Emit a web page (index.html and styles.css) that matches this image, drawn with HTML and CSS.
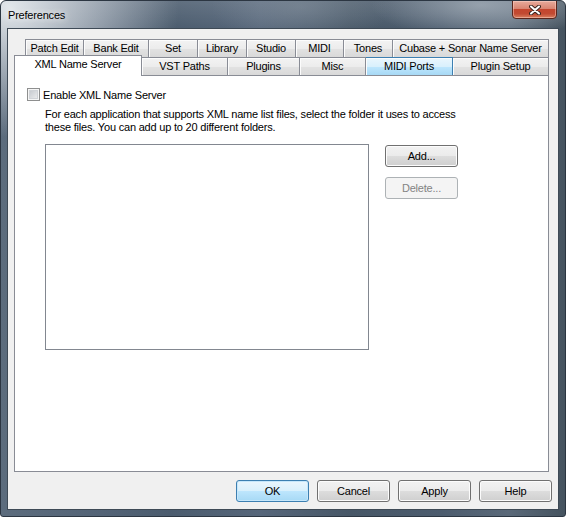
FILE: index.html
```
<!DOCTYPE html>
<html lang="en">
<head>
    <meta charset="UTF-8">
    <title>Preferences</title>
    <link rel="stylesheet" href="styles.css">
</head>
<body>
    <div class="window">
        <div class="titlebar">
            <span class="title">Preferences</span>
            <button class="close-btn" title="Close">
                <svg width="12" height="10" viewBox="0 0 12 10">
                    <path d="M2 1.5 L10 8.5 M10 1.5 L2 8.5" stroke="#3b2620" stroke-width="4" stroke-linecap="round"/>
                    <path d="M2 1.5 L10 8.5 M10 1.5 L2 8.5" stroke="#fff" stroke-width="2" stroke-linecap="round"/>
                </svg>
            </button>
        </div>

        <div class="client">
            <div class="tabs">
                <div class="tab-row back">
                    <div class="tab">Patch Edit</div>
                    <div class="tab">Bank Edit</div>
                    <div class="tab">Set</div>
                    <div class="tab">Library</div>
                    <div class="tab">Studio</div>
                    <div class="tab">MIDI</div>
                    <div class="tab">Tones</div>
                    <div class="tab">Cubase + Sonar Name Server</div>
                </div>
                <div class="tab-row front">
                    <div class="tab selected">XML Name Server</div>
                    <div class="tab">VST Paths</div>
                    <div class="tab">Plugins</div>
                    <div class="tab">Misc</div>
                    <div class="tab hover">MIDI Ports</div>
                    <div class="tab">Plugin Setup</div>
                </div>

                <div class="panel">
                    <label class="check-row">
                        <span class="checkbox"></span>
                        Enable XML Name Server
                    </label>
                    <p class="hint">For each application that supports XML name list files, select the folder it uses to access<br>these files. You can add up to 20 different folders.</p>

                    <div class="list-row">
                        <div class="listbox"></div>
                        <div class="side-buttons">
                            <button class="btn">Add...</button>
                            <button class="btn" disabled>Delete...</button>
                        </div>
                    </div>
                </div>
            </div>

            <div class="footer">
                <button class="btn default">OK</button>
                <button class="btn">Cancel</button>
                <button class="btn">Apply</button>
                <button class="btn">Help</button>
            </div>
        </div>
    </div>
</body>
</html>
```

FILE: styles.css
```
body {
    margin: 0;
    background: #fff;
    font: 11px "Liberation Sans", Arial, sans-serif;
    letter-spacing: -0.2px;
    color: #000;
}

/* Aero-style window frame */
.window {
    width: 566px;
    height: 517px;
    box-sizing: border-box;
    border: 1px solid #2c3642;
    border-radius: 6px 6px 3px 3px;
    display: flex;
    flex-direction: column;
    overflow: hidden;
    background:
        radial-gradient(ellipse 170px 130px at 8px 6px, rgba(232, 236, 240, 0.95), rgba(232, 236, 240, 0)),
        radial-gradient(ellipse 110px 34px at 480px 4px, rgba(170, 180, 190, 0.7), rgba(170, 180, 190, 0)),
        radial-gradient(ellipse 90px 40px at 300px 6px, rgba(140, 152, 164, 0.45), rgba(140, 152, 164, 0)),
        linear-gradient(to bottom, rgba(255, 255, 255, 0.12), rgba(255, 255, 255, 0) 28px),
        linear-gradient(to right, #5c6c7d 0%, #536376 18%, #4b5c6e 30%, #56667a 46%, #475767 62%, #4c5c6e 78%, #5a6979 90%, #45535f 100%);
}

.titlebar {
    height: 27px;
    display: flex;
    justify-content: space-between;
    align-items: flex-start;
    padding-left: 7px;
}

.title {
    margin-top: 8px;
    line-height: 13px;
    text-shadow: 0 0 6px rgba(255, 255, 255, 0.9), 0 0 10px rgba(255, 255, 255, 0.6);
}

.close-btn {
    width: 45px;
    height: 19px;
    margin: -1px 8px 0 0;
    padding: 0;
    display: flex;
    align-items: center;
    justify-content: center;
    border: 1px solid #5b261c;
    border-radius: 0 0 4px 4px;
    background: linear-gradient(#e8ab9c 0%, #d98572 45%, #c4462e 50%, #c24a32 75%, #d9805f 100%);
    box-shadow: inset 0 0 0 1px rgba(255, 220, 210, 0.45);
}

.client {
    flex: 1;
    margin: 0 6px 6px;
    border: 1px solid #3e4a56;
    background: #f0f0f0;
    display: flex;
    flex-direction: column;
}

/* Tab control */
.tabs {
    margin: 10px 0 0 6px;
    width: 535px;
}

.tab-row {
    display: grid;
    grid-template-rows: 18px;
}

.tab-row.back {
    margin-left: 11px;
    grid-template-columns: 59px 65px 49px 49px 49px 48px 49px 156px;
}

.tab-row.front {
    grid-template-columns: 128px 86px 72px 66px 87px 96px;
    align-items: end;
}

.tab {
    box-sizing: border-box;
    height: 18px;
    border: 1px solid #898c95;
    border-bottom: none;
    border-left: none;
    background: linear-gradient(#f3f3f3 0%, #ececec 50%, #e2e2e2 51%, #d9d9d9 100%);
    box-shadow: inset 1px 1px 0 #fcfcfc;
    text-align: center;
    line-height: 17px;
    white-space: nowrap;
}

.tab:first-child {
    border-left: 1px solid #898c95;
}

.tab.hover {
    border-color: #3c7fb1;
    background: linear-gradient(#eaf6fd 0%, #d9f0fc 50%, #bee6fd 51%, #a7d9f5 100%);
}

.tab.selected {
    position: relative;
    z-index: 2;
    height: 21px;
    margin-bottom: -1px;
    border-left: 1px solid #898c95;
    background: #fff;
    box-shadow: none;
    line-height: 16px;
}

.panel {
    box-sizing: border-box;
    width: 535px;
    height: 397px;
    border: 1px solid #898c95;
    background: #fff;
    padding: 12px 0 0 12px;
}

.check-row {
    display: flex;
    align-items: center;
    gap: 3px;
    height: 13px;
}

.checkbox {
    width: 13px;
    height: 13px;
    box-sizing: border-box;
    border: 1px solid #8e8f8f;
    background: linear-gradient(135deg, #bfc3c9, #f3f3f3);
    box-shadow: inset 0 0 0 1px #f6f6f6, inset 0 0 0 2px #d0d3d7;
}

.hint {
    margin: 7px 0 0 18px;
    line-height: 13px;
    white-space: nowrap;
}

.list-row {
    display: flex;
    gap: 16px;
    margin: 10px 0 0 18px;
}

.listbox {
    width: 324px;
    height: 206px;
    box-sizing: border-box;
    border: 1px solid #828790;
    background: #fff;
}

.side-buttons {
    display: flex;
    flex-direction: column;
    gap: 10px;
    padding-top: 1px;
}

/* Push buttons */
.btn {
    width: 73px;
    height: 22px;
    padding: 0;
    font: inherit;
    letter-spacing: inherit;
    color: #000;
    border: 1px solid #707070;
    border-radius: 3px;
    background: linear-gradient(#f2f2f2 0%, #ebebeb 49%, #dddddd 50%, #cfcfcf 100%);
    box-shadow: inset 0 0 0 1px #fcfcfc;
}

.btn.default {
    border-color: #3c7fb1;
    background: linear-gradient(#eaf6fd 0%, #d9f0fc 49%, #bee6fd 50%, #a7d9f5 100%);
    box-shadow: inset 0 0 0 1px #c6e7fb;
}

.btn:disabled {
    border-color: #adb2b5;
    background: #f4f4f4;
    color: #838383;
    box-shadow: none;
}

.footer {
    display: flex;
    justify-content: flex-end;
    gap: 8px;
    padding: 8px 6px 0 0;
}
```
